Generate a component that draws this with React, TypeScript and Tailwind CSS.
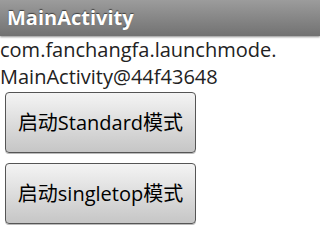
export default function App() {
  const font = { fontFamily: '"Open Sans", "Noto Sans CJK SC", sans-serif' }
  return (
    <div className="w-[320px] h-[252px] bg-white overflow-hidden" style={font}>
      <div className="relative z-10 h-[36px] bg-gradient-to-b from-[#9c9c9c] to-[#727272] flex items-center pl-[7px] shadow-[0_1px_2px_rgba(0,0,0,0.45)]">
        <span className="text-[20px] font-bold text-white leading-none [text-shadow:0_-1px_1px_#404040]">
          MainActivity
        </span>
      </div>
      <p className="text-[20px] leading-[27px] text-[#222]">
        com.fanchangfa.launchmode.
        <br />
        MainActivity@44f43648
      </p>
      <div className="flex flex-col gap-[10px] pl-[5px] pt-[2px]">
        <button className="w-[191px] h-[61px] rounded-[4px] border border-[#555] bg-gradient-to-b from-[#f4f4f4] to-[#c6c6c6] text-[20px] text-black shadow-[0_1px_0_#bbb]">
          启动Standard模式
        </button>
        <button className="w-[191px] h-[61px] rounded-[4px] border border-[#555] bg-gradient-to-b from-[#f4f4f4] to-[#c6c6c6] text-[20px] text-black shadow-[0_1px_0_#bbb]">
          启动singletop模式
        </button>
      </div>
    </div>
  )
}
